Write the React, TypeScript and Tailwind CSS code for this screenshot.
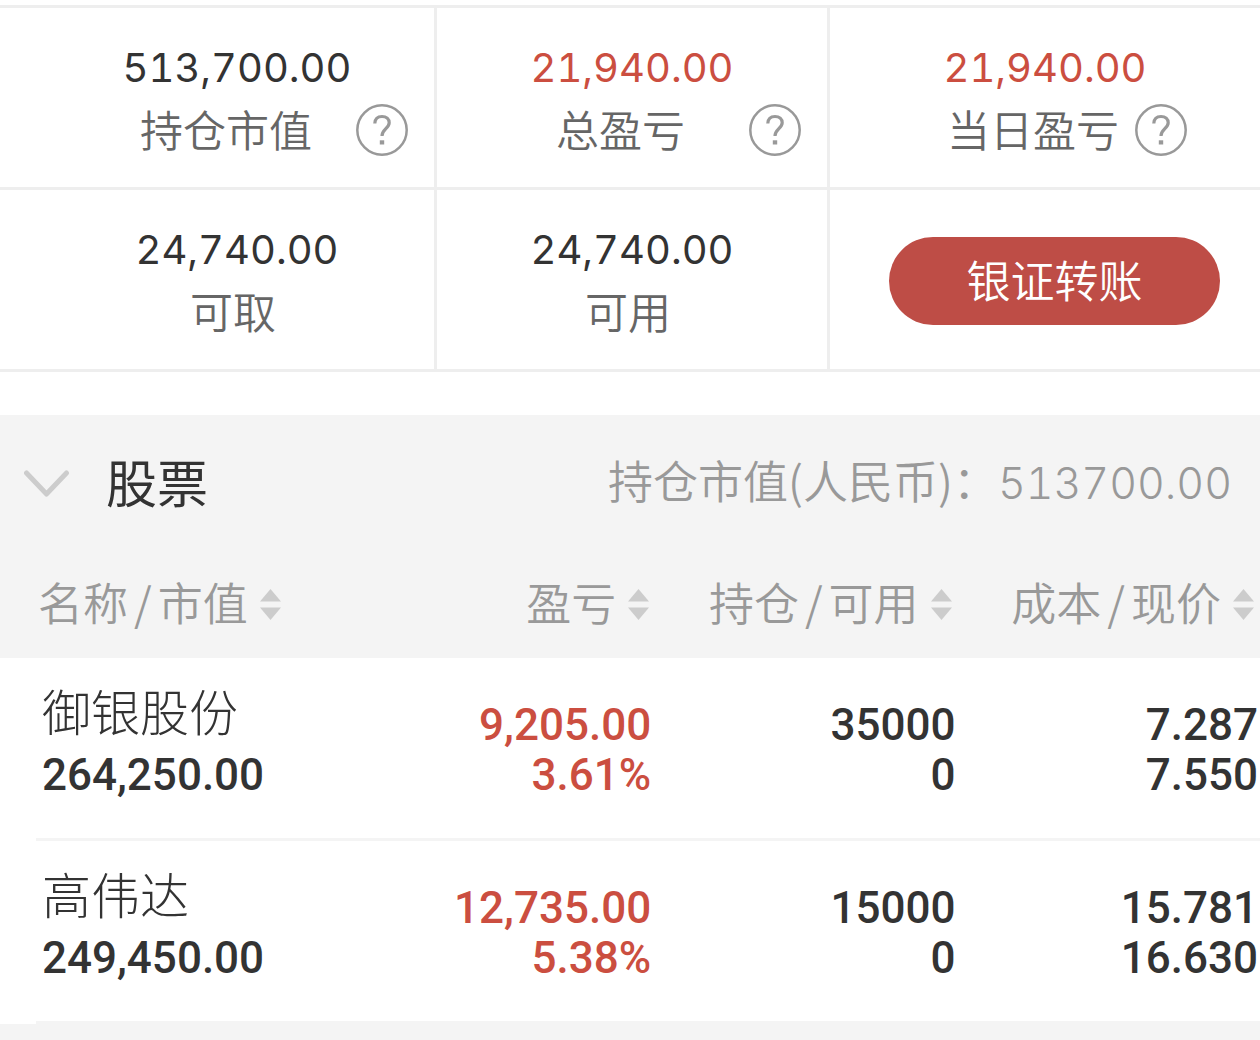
// Brokerage account overview: balances on top, stock holdings below

type Stat = {
  value: string;
  label: string;
  tone: string;
  labelRow: string;
  help?: boolean;
};

const stats: Stat[] = [
  { value: '513,700.00', label: '持仓市值', tone: 'text-[#333333]', labelRow: 'justify-end gap-11 pr-[26px]', help: true },
  { value: '21,940.00', label: '总盈亏', tone: 'text-[#cb4e40]', labelRow: 'justify-end gap-16 pr-[26px]', help: true },
  { value: '21,940.00', label: '当日盈亏', tone: 'text-[#cb4e40]', labelRow: 'justify-end gap-4 pr-[73px]', help: true },
  { value: '24,740.00', label: '可取', tone: 'text-[#333333]', labelRow: 'justify-center pr-2' },
  { value: '24,740.00', label: '可用', tone: 'text-[#333333]', labelRow: 'justify-center pr-2' },
];

const columns = [
  { first: '名称', second: '市值' },
  { first: '盈亏' },
  { first: '持仓', second: '可用' },
  { first: '成本', second: '现价' },
];

const holdings = [
  { name: '御银股份', value: '264,250.00', profit: '9,205.00', rate: '3.61%', held: '35000', usable: '0', cost: '7.287', price: '7.550' },
  { name: '高伟达', value: '249,450.00', profit: '12,735.00', rate: '5.38%', held: '15000', usable: '0', cost: '15.781', price: '16.630' },
];

const HelpIcon = () => (
  <svg viewBox="0 0 52 52" className="h-[52px] w-[52px]" fill="none" stroke="#999999" aria-hidden="true">
    <circle cx="26" cy="26" r="24.7" strokeWidth="2.5" />
    <path d="M18.8 19.5C19 14.8 22 12.5 26 12.5C30.4 12.5 33.2 15.2 33.2 18.8C33.2 24.2 26 25.5 26 32" strokeWidth="3.2" />
    <rect x="23.8" y="36.3" width="4.4" height="4.2" fill="#999999" stroke="none" />
  </svg>
);

const SortIcon = () => (
  <svg viewBox="0 0 21 31" className="h-[31px] w-[21px] shrink-0" fill="#cccccc" aria-hidden="true">
    <path d="M10.5 0L21 12.5H0Z" />
    <path d="M10.5 31L21 18.5H0Z" />
  </svg>
);

const StatCell = ({ stat }: { stat: Stat }) => (
  <div className="flex h-full flex-col pt-[30px]">
    <div className={`text-center font-['Inter',sans-serif] text-[40px] leading-[60px] tabular-nums ${stat.tone}`}>
      {stat.value}
    </div>
    <div className={`flex h-16 items-center ${stat.labelRow}`}>
      <span className="pb-1 text-[43px] leading-[60px] font-[350] text-[#666666]">{stat.label}</span>
      {stat.help && (
        <button type="button" aria-label={`${stat.label}说明`}>
          <HelpIcon />
        </button>
      )}
    </div>
  </div>
);

const HoldingsTable = () => (
  <table className="w-full table-fixed border-separate border-spacing-0">
    <colgroup>
      <col className="w-9" />
      <col />
      <col className="w-[20%]" />
      <col className="w-[24%]" />
      <col className="w-[24%]" />
    </colgroup>
    <thead>
      <tr className="h-[107px]">
        {columns.map((column, index) => (
          <th key={column.first} scope="col" colSpan={index === 0 ? 2 : 1} className="p-0 font-[350]">
            <button
              type="button"
              className={`flex w-full items-center gap-3 text-[45px] leading-[60px] whitespace-nowrap text-[#999999] ${
                index === 0 ? 'pl-[38px]' : 'justify-end pr-1.5'
              }`}
            >
              <span className="pb-1.5">
                {column.first}
                {column.second && <span className="mx-1.5">/</span>}
                {column.second}
              </span>
              <SortIcon />
            </button>
          </th>
        ))}
      </tr>
    </thead>
    <tbody className="bg-white font-['Roboto',sans-serif] text-[44px] leading-[50px] font-medium text-[#333333]">
      {holdings.map((row) => (
        <tr key={row.name} className="align-bottom">
          <td className="p-0" />
          <td className="border-b-[3px] border-[#f4f4f4] pt-3 pb-[38px] pl-1.5">
            <div className="font-['Noto_Sans_CJK_SC',sans-serif] text-[49px] leading-[80px] font-light">{row.name}</div>
            <div>{row.value}</div>
          </td>
          <td className="border-b-[3px] border-[#f4f4f4] pr-1 pb-[38px] text-right text-[#cb4e40]">
            <div>{row.profit}</div>
            <div>{row.rate}</div>
          </td>
          <td className="border-b-[3px] border-[#f4f4f4] pr-0.5 pb-[38px] text-right">
            <div>{row.held}</div>
            <div>{row.usable}</div>
          </td>
          <td className="border-b-[3px] border-[#f4f4f4] pr-0.5 pb-[38px] text-right">
            <div>{row.cost}</div>
            <div>{row.price}</div>
          </td>
        </tr>
      ))}
    </tbody>
  </table>
);

const App = () => {
  return (
    <main className="min-h-screen bg-[#f4f4f4] font-['Noto_Sans_CJK_SC',sans-serif]">
      <section className="bg-white pt-[5px] pb-[43px]">
        <div className="grid grid-cols-[437fr_393fr_430fr] border-t-[3px] border-[#eeeeee]">
          {stats.map((stat, index) => (
            <div
              key={index}
              className={`h-[182px] border-b-[3px] border-[#eeeeee] ${index % 3 === 2 ? '' : 'border-r-[3px]'} ${
                index % 3 === 0 ? 'pl-10' : ''
              }`}
            >
              <StatCell stat={stat} />
            </div>
          ))}
          <div className="flex items-center justify-end border-b-[3px] border-[#eeeeee] pt-0.5 pr-10">
            <button
              type="button"
              className="h-[88px] w-[331px] rounded-full bg-[#be4d46] pb-1 text-[44px] leading-[60px] font-[350] text-white"
            >
              银证转账
            </button>
          </div>
        </div>
      </section>

      <section>
        <header className="flex h-[136px] items-center justify-between pr-7 pl-6">
          <h2>
            <button type="button" className="flex items-center gap-9 text-[51px] leading-[60px] text-[#333333]">
              <svg viewBox="0 0 46 27" className="h-[27px] w-[46px]" fill="none" stroke="#cccccc" strokeWidth="5" strokeLinecap="round" strokeLinejoin="round" aria-hidden="true">
                <path d="M2.500 3L22.500 24L42.500 3" />
              </svg>
              <span className="pb-1">股票</span>
            </button>
          </h2>
          <p className="pb-1 text-[45px] leading-[60px] font-[350] text-[#999999]">
            持仓市值(人民币)：<span className="font-['Inter',sans-serif] text-[43px] font-light tabular-nums">513700.00</span>
          </p>
        </header>
        <HoldingsTable />
      </section>
    </main>
  );
};

export default App;
